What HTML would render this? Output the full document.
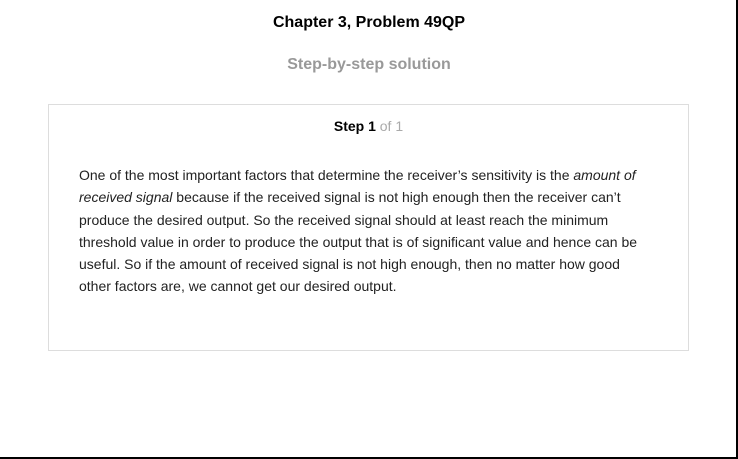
<!DOCTYPE html>
<html><head><style>
html,body{margin:0;padding:0;background:#fff;}
body{width:738px;height:459px;position:relative;overflow:hidden;font-family:"Liberation Sans",Arial,sans-serif;}
.frame{position:absolute;left:0;top:0;width:736px;height:457px;border-right:2px solid #000;border-bottom:2px solid #000;}
h1{position:absolute;top:14px;left:0;width:738px;text-align:center;font-size:16px;font-weight:bold;margin:0;color:#000;}
h2{position:absolute;top:56px;left:0;width:738px;text-align:center;font-size:16px;font-weight:bold;margin:0;color:#999;}
.box{position:absolute;left:48px;top:104px;width:639px;height:245px;border:1px solid #ddd;}
.step{position:absolute;top:13px;left:0;width:100%;text-align:center;font-size:14px;}
.step b{color:#000}.step span{color:#aaa}
p{position:absolute;left:30px;top:59px;width:575px;margin:0;font-size:14px;line-height:22.3px;color:#222;}
</style></head><body>
<div class="frame"></div>
<h1>Chapter 3, Problem 49QP</h1>
<h2>Step-by-step solution</h2>
<div class="box">
<div class="step"><b>Step 1</b> <span>of 1</span></div>
<p>One of the most important factors that determine the receiver’s sensitivity is the <i>amount of received signal</i> because if the received signal is not high enough then the receiver can’t produce the desired output. So the received signal should at least reach the minimum threshold value in order to produce the output that is of significant value and hence can be useful. So if the amount of received signal is not high enough, then no matter how good other factors are, we cannot get our desired output.</p>
</div>
</body></html>
